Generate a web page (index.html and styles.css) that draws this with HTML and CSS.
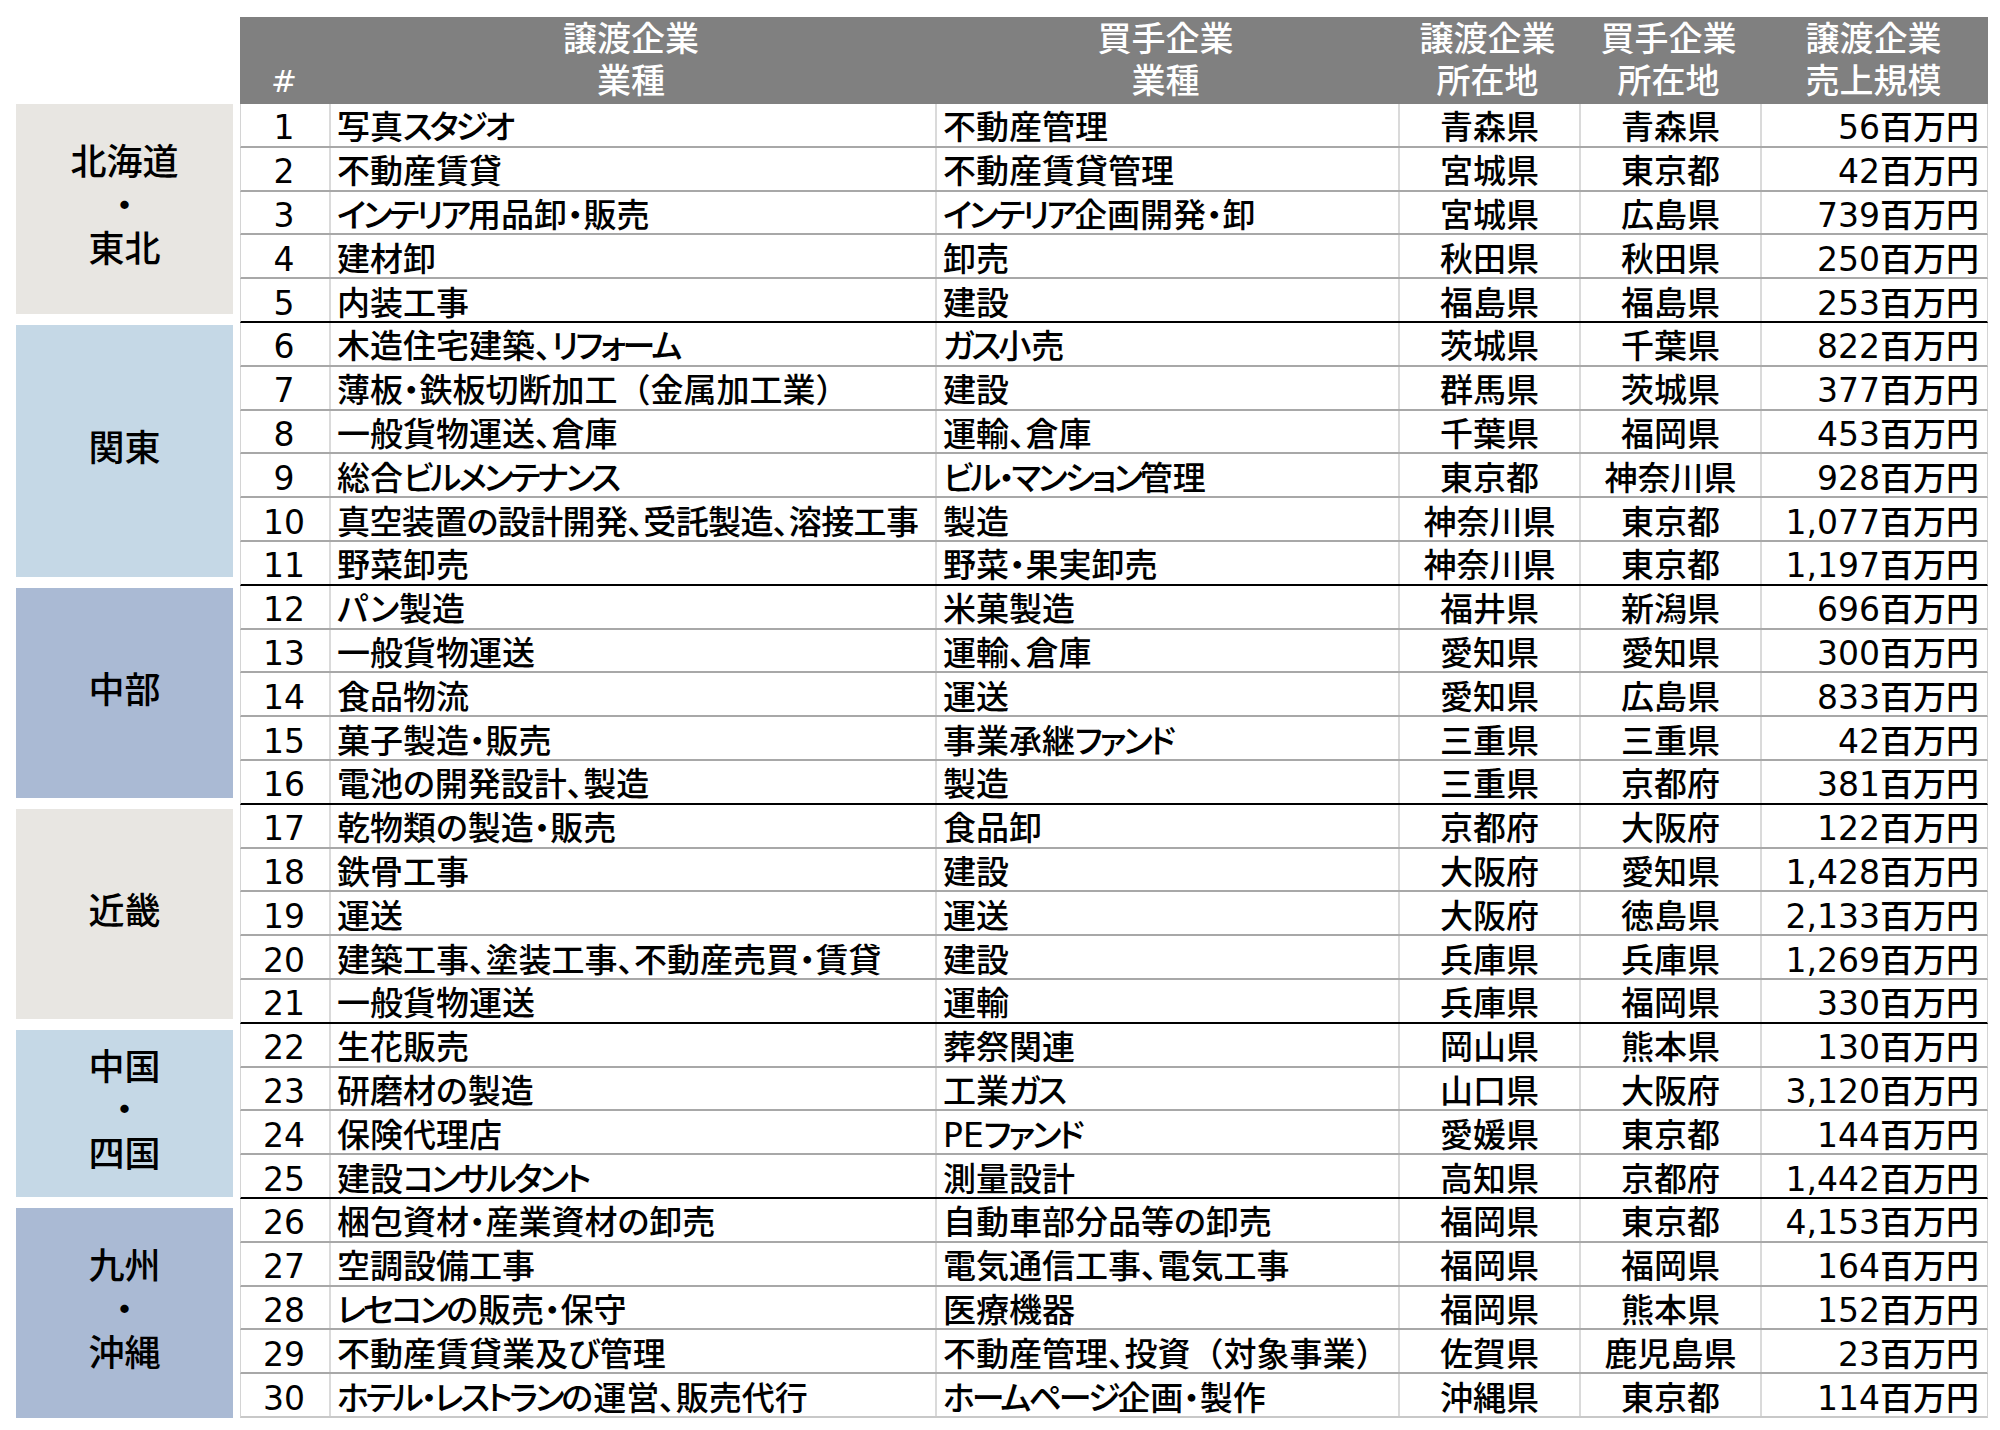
FILE: index.html
```html
<!DOCTYPE html>
<html lang="ja">
<head>
<meta charset="utf-8">
<title>成約事例</title>
<link rel="stylesheet" href="styles.css">
</head>
<body>
<div class="page">
  <div class="regions">
    <div class="region tone-a h5"><span>北海道</span><span>・</span><span>東北</span></div>
    <div class="region tone-b h6"><span>関東</span></div>
    <div class="region tone-c h5"><span>中部</span></div>
    <div class="region tone-a h5"><span>近畿</span></div>
    <div class="region tone-b h4"><span>中国</span><span>・</span><span>四国</span></div>
    <div class="region tone-c h5"><span>九州</span><span>・</span><span>沖縄</span></div>
  </div>
  <div class="table">
    <div class="head">
      <div class="hc"><span>#</span></div>
      <div class="hc"><span>譲渡企業</span><span>業種</span></div>
      <div class="hc"><span>買手企業</span><span>業種</span></div>
      <div class="hc"><span>譲渡企業</span><span>所在地</span></div>
      <div class="hc"><span>買手企業</span><span>所在地</span></div>
      <div class="hc"><span>譲渡企業</span><span>売上規模</span></div>
    </div>

    <div class="row"><div class="c num">1</div><div class="c txt">写真<span class="kn">スタジオ</span></div><div class="c txt">不動産管理</div><div class="c ctr">青森県</div><div class="c ctr">青森県</div><div class="c amt">56百万円</div></div>
    <div class="row"><div class="c num">2</div><div class="c txt">不動産賃貸</div><div class="c txt">不動産賃貸管理</div><div class="c ctr">宮城県</div><div class="c ctr">東京都</div><div class="c amt">42百万円</div></div>
    <div class="row"><div class="c num">3</div><div class="c txt"><span class="kn">インテリア</span>用品卸・販売</div><div class="c txt"><span class="kn">インテリア</span>企画開発・卸</div><div class="c ctr">宮城県</div><div class="c ctr">広島県</div><div class="c amt">739百万円</div></div>
    <div class="row"><div class="c num">4</div><div class="c txt">建材卸</div><div class="c txt">卸売</div><div class="c ctr">秋田県</div><div class="c ctr">秋田県</div><div class="c amt">250百万円</div></div>
    <div class="row end"><div class="c num">5</div><div class="c txt">内装工事</div><div class="c txt">建設</div><div class="c ctr">福島県</div><div class="c ctr">福島県</div><div class="c amt">253百万円</div></div>

    <div class="row"><div class="c num">6</div><div class="c txt">木造住宅建築、<span class="kn">リフォーム</span></div><div class="c txt"><span class="kn">ガス</span>小売</div><div class="c ctr">茨城県</div><div class="c ctr">千葉県</div><div class="c amt">822百万円</div></div>
    <div class="row"><div class="c num">7</div><div class="c txt">薄板・鉄板切断加工<span class="fw">（金属加工業）</span></div><div class="c txt">建設</div><div class="c ctr">群馬県</div><div class="c ctr">茨城県</div><div class="c amt">377百万円</div></div>
    <div class="row"><div class="c num">8</div><div class="c txt">一般貨物運送、倉庫</div><div class="c txt">運輸、倉庫</div><div class="c ctr">千葉県</div><div class="c ctr">福岡県</div><div class="c amt">453百万円</div></div>
    <div class="row"><div class="c num">9</div><div class="c txt">総合<span class="kn">ビルメンテナンス</span></div><div class="c txt"><span class="kn">ビル・マンション</span>管理</div><div class="c ctr">東京都</div><div class="c ctr">神奈川県</div><div class="c amt">928百万円</div></div>
    <div class="row"><div class="c num">10</div><div class="c txt tight">真空装置の設計開発、受託製造、溶接工事</div><div class="c txt">製造</div><div class="c ctr">神奈川県</div><div class="c ctr">東京都</div><div class="c amt">1,077百万円</div></div>
    <div class="row end"><div class="c num">11</div><div class="c txt">野菜卸売</div><div class="c txt">野菜・果実卸売</div><div class="c ctr">神奈川県</div><div class="c ctr">東京都</div><div class="c amt">1,197百万円</div></div>

    <div class="row"><div class="c num">12</div><div class="c txt">パン製造</div><div class="c txt">米菓製造</div><div class="c ctr">福井県</div><div class="c ctr">新潟県</div><div class="c amt">696百万円</div></div>
    <div class="row"><div class="c num">13</div><div class="c txt">一般貨物運送</div><div class="c txt">運輸、倉庫</div><div class="c ctr">愛知県</div><div class="c ctr">愛知県</div><div class="c amt">300百万円</div></div>
    <div class="row"><div class="c num">14</div><div class="c txt">食品物流</div><div class="c txt">運送</div><div class="c ctr">愛知県</div><div class="c ctr">広島県</div><div class="c amt">833百万円</div></div>
    <div class="row"><div class="c num">15</div><div class="c txt">菓子製造・販売</div><div class="c txt">事業承継<span class="kn">ファンド</span></div><div class="c ctr">三重県</div><div class="c ctr">三重県</div><div class="c amt">42百万円</div></div>
    <div class="row end"><div class="c num">16</div><div class="c txt">電池の開発設計、製造</div><div class="c txt">製造</div><div class="c ctr">三重県</div><div class="c ctr">京都府</div><div class="c amt">381百万円</div></div>

    <div class="row"><div class="c num">17</div><div class="c txt">乾物類の製造・販売</div><div class="c txt">食品卸</div><div class="c ctr">京都府</div><div class="c ctr">大阪府</div><div class="c amt">122百万円</div></div>
    <div class="row"><div class="c num">18</div><div class="c txt">鉄骨工事</div><div class="c txt">建設</div><div class="c ctr">大阪府</div><div class="c ctr">愛知県</div><div class="c amt">1,428百万円</div></div>
    <div class="row"><div class="c num">19</div><div class="c txt">運送</div><div class="c txt">運送</div><div class="c ctr">大阪府</div><div class="c ctr">徳島県</div><div class="c amt">2,133百万円</div></div>
    <div class="row"><div class="c num">20</div><div class="c txt">建築工事、塗装工事、不動産売買・賃貸</div><div class="c txt">建設</div><div class="c ctr">兵庫県</div><div class="c ctr">兵庫県</div><div class="c amt">1,269百万円</div></div>
    <div class="row end"><div class="c num">21</div><div class="c txt">一般貨物運送</div><div class="c txt">運輸</div><div class="c ctr">兵庫県</div><div class="c ctr">福岡県</div><div class="c amt">330百万円</div></div>

    <div class="row"><div class="c num">22</div><div class="c txt">生花販売</div><div class="c txt">葬祭関連</div><div class="c ctr">岡山県</div><div class="c ctr">熊本県</div><div class="c amt">130百万円</div></div>
    <div class="row"><div class="c num">23</div><div class="c txt">研磨材の製造</div><div class="c txt">工業<span class="kn">ガス</span></div><div class="c ctr">山口県</div><div class="c ctr">大阪府</div><div class="c amt">3,120百万円</div></div>
    <div class="row"><div class="c num">24</div><div class="c txt">保険代理店</div><div class="c txt">PE<span class="kn">ファンド</span></div><div class="c ctr">愛媛県</div><div class="c ctr">東京都</div><div class="c amt">144百万円</div></div>
    <div class="row end"><div class="c num">25</div><div class="c txt">建設<span class="kn">コンサルタント</span></div><div class="c txt">測量設計</div><div class="c ctr">高知県</div><div class="c ctr">京都府</div><div class="c amt">1,442百万円</div></div>

    <div class="row"><div class="c num">26</div><div class="c txt">梱包資材・産業資材の卸売</div><div class="c txt">自動車部分品等の卸売</div><div class="c ctr">福岡県</div><div class="c ctr">東京都</div><div class="c amt">4,153百万円</div></div>
    <div class="row"><div class="c num">27</div><div class="c txt">空調設備工事</div><div class="c txt">電気通信工事、電気工事</div><div class="c ctr">福岡県</div><div class="c ctr">福岡県</div><div class="c amt">164百万円</div></div>
    <div class="row"><div class="c num">28</div><div class="c txt"><span class="kn">レセコン</span>の販売・保守</div><div class="c txt">医療機器</div><div class="c ctr">福岡県</div><div class="c ctr">熊本県</div><div class="c amt">152百万円</div></div>
    <div class="row"><div class="c num">29</div><div class="c txt">不動産賃貸業及び管理</div><div class="c txt">不動産管理、投資<span class="fw">（対象事業）</span></div><div class="c ctr">佐賀県</div><div class="c ctr">鹿児島県</div><div class="c amt">23百万円</div></div>
    <div class="row last"><div class="c num">30</div><div class="c txt"><span class="kn">ホテル・レストラン</span>の運営、販売代行</div><div class="c txt"><span class="kn">ホームページ</span>企画・製作</div><div class="c ctr">沖縄県</div><div class="c ctr">東京都</div><div class="c amt">114百万円</div></div>
  </div>
</div>
</body>
</html>
```

FILE: styles.css
```css
* { box-sizing: border-box; }

html, body {
  margin: 0;
  padding: 0;
  background: #ffffff;
}

body {
  font-family: "DejaVu Sans", "Noto Sans CJK JP", sans-serif;
  font-feature-settings: "palt" 1;
  font-weight: 500;
  color: #000000;
}

.page {
  display: flex;
  align-items: flex-start;
  gap: 7px;
  padding: 17px 0 0 16px;
}

/* region labels */
.regions {
  width: 217px;
  margin-top: 87px;
  display: flex;
  flex-direction: column;
  gap: 11px;
}

.region {
  display: flex;
  flex-direction: column;
  align-items: center;
  justify-content: center;
  font-size: 36px;
  line-height: 43.5px;
  padding-bottom: 5px;
}

.h4 { height: 167px; }
.h5 { height: 210px; }
.h6 { height: 252px; }

.tone-a { background: #e8e6e2; }
.tone-b { background: #c5d8e6; }
.tone-c { background: #aabad4; }

/* table */
.table {
  width: 1748px;
  display: flex;
  flex-direction: column;
}

.head,
.row {
  display: grid;
  grid-template-columns: 88px 606px 463px 181px 181px 229px;
}

.head {
  height: 87px;
  background: #808080;
  color: #ffffff;
  font-size: 34px;
  line-height: 42px;
}

.hc {
  display: flex;
  flex-direction: column;
  justify-content: flex-end;
  align-items: center;
  padding-bottom: 2px;
}

.hc:first-child {
  font-size: 31px;
}

.row {
  height: 43.8px;
  border-bottom: 2px solid #a8a8a8;
  border-left: 1px solid #d4d4d4;
  border-right: 1px solid #d4d4d4;
  font-size: 33px;
}

.row.end { border-bottom-color: #000000; }
.row.last { border-bottom-color: #c8c8c8; }

.c {
  display: flex;
  align-items: center;
  white-space: pre;
  line-height: 1;
  padding-top: 6px;
}

.c + .c { border-left: 2px solid #dadada; }

.num {
  justify-content: center;
  padding-right: 2px;
}

.txt {
  justify-content: flex-start;
  padding-left: 6px;
}

.kn { letter-spacing: -3px; }
.fw { font-feature-settings: normal; }
.tight { letter-spacing: -0.6px; }

.ctr { justify-content: center; }

.amt {
  justify-content: flex-end;
  padding-right: 10px;
}
```
